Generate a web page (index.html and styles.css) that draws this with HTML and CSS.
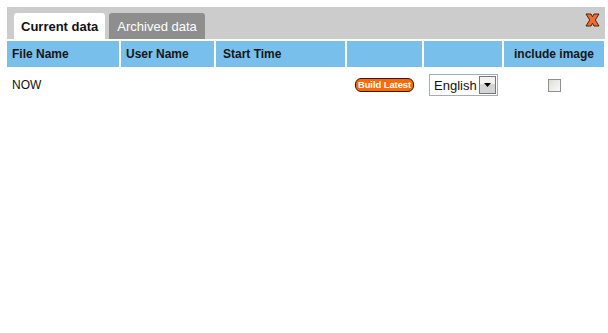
FILE: index.html
```html
<!DOCTYPE html>
<html>
<head>
<meta charset="utf-8">
<link rel="stylesheet" href="styles.css">
</head>
<body>
<div class="panel">
  <div class="tabbar">
    <div class="tab active">Current data</div>
    <div class="tab">Archived data</div>
    <div class="close">
      <svg width="15" height="14" viewBox="0 0 15 14">
        <polygon points="1,1 6,1 7.5,3.8 9,1 14,1 10.3,7 14,13 9,13 7.5,10.2 6,13 1,13 4.7,7" fill="#f26a2c" stroke="#4a2412" stroke-width="1" stroke-linejoin="round"/>
      </svg>
    </div>
  </div>
  <div class="grid header">
    <div class="cell">File Name</div>
    <div class="cell">User Name</div>
    <div class="cell wide">Start Time</div>
    <div class="cell"></div>
    <div class="cell"></div>
    <div class="cell center">include image</div>
  </div>
  <div class="grid row">
    <div class="cell">NOW</div>
    <div class="cell"></div>
    <div class="cell"></div>
    <div class="cell center"><span class="build">Build Latest</span></div>
    <div class="cell center">
      <div class="select"><span class="sel-text">English</span><span class="sel-btn"><svg width="7" height="4" viewBox="0 0 7 4"><polygon points="0,0 7,0 3.5,4" fill="#000"/></svg></span></div>
    </div>
    <div class="cell center"><span class="check"></span></div>
  </div>
</div>
</body>
</html>
```
FILE: styles.css
```css
html, body {
  margin: 0;
  padding: 0;
  background: #fff;
}
body {
  font-family: "Liberation Sans", Arial, sans-serif;
  color: #111;
}
.panel {
  margin: 7px 0 0 7px;
  width: 598px;
}
.tabbar {
  background: #cccccc;
  height: 32px;
  padding: 6px 0 0 7px;
  box-sizing: border-box;
  display: flex;
  align-items: flex-end;
  gap: 4px;
  position: relative;
}
.tab {
  height: 26px;
  box-sizing: border-box;
  padding: 0 8px 0 8px;
  font-size: 13px;
  line-height: 27px;
  background: #8e8e8e;
  color: #fff;
  border-radius: 3px 3px 0 0;
}
.tab.active {
  background: #fff;
  color: #111;
  font-weight: bold;
  padding: 0 7px;
}
.close {
  margin-left: auto;
  margin-right: 5px;
  align-self: flex-start;
  margin-top: 0;
  height: 14px;
}
.close svg { display: block; }
.grid {
  display: grid;
  grid-template-columns: 112px 93px 129px 75px 78px 100px;
  column-gap: 2px;
}
.header {
  margin-top: 2px;
}
.header .cell {
  background: #78bfec;
  height: 26px;
  line-height: 27px;
  font-size: 12px;
  font-weight: bold;
  padding-left: 5px;
  color: #161616;
}
.header .cell.wide {
  padding-left: 7px;
}
.header .cell.center {
  padding-left: 0;
  text-align: center;
}
.row .cell {
  height: 36px;
  font-size: 12px;
  padding-left: 5px;
  display: flex;
  align-items: center;
}
.row .cell.center {
  padding-left: 0;
  justify-content: center;
}
.build {
  display: inline-block;
  background: #ff6a00;
  color: #fff;
  font-weight: bold;
  font-size: 9.5px;
  line-height: 12px;
  height: 12px;
  width: 57px;
  box-sizing: content-box;
  padding: 0;
  letter-spacing: -0.1px;
  text-align: center;
  border: 1px solid #2a1a10;
  border-radius: 6px;
  margin-left: 0;
}
.select {
  width: 69px;
  height: 22px;
  box-sizing: border-box;
  border: 1px solid #a5acb2;
  display: flex;
  align-items: center;
  padding: 1px;
  background: #fff;
  margin-left: 1px;
}
.sel-text {
  flex: 1;
  font-size: 13px;
  padding-left: 3px;
  color: #111;
}
.sel-btn {
  width: 17px;
  height: 18px;
  box-sizing: border-box;
  border: 1px solid #777;
  background: linear-gradient(#f2f2f2 0%, #f2f2f2 45%, #d4d4d4 45%, #d4d4d4 100%);
  display: flex;
  align-items: center;
  justify-content: center;
}
.sel-btn svg { display: block; }
.check {
  display: block;
  width: 13px;
  height: 13px;
  box-sizing: border-box;
  border: 1px solid #8f8f8f;
  background: linear-gradient(135deg, #dcdcd6, #fafafa);
  margin-left: 1px;
}
```
